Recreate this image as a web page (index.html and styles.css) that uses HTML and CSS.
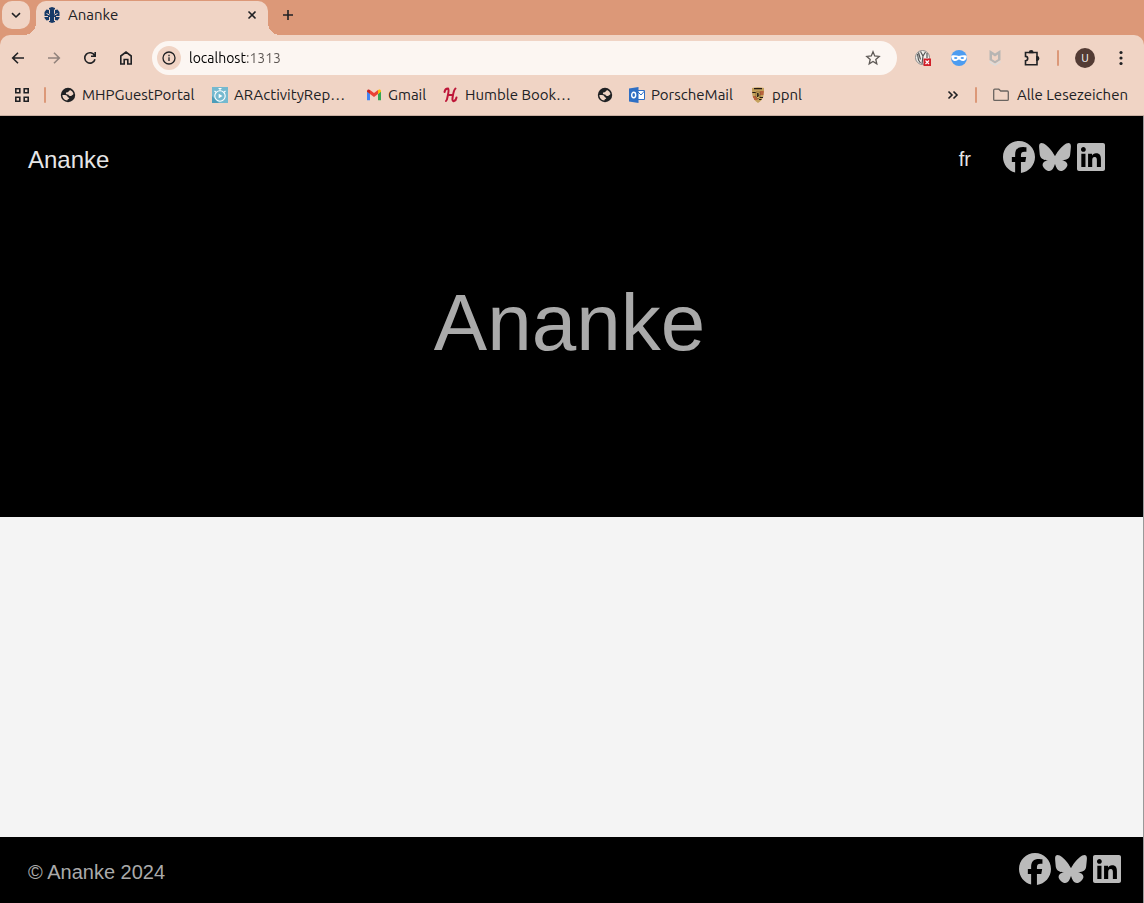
FILE: index.html
```html
<!DOCTYPE html>
<html lang="en">
<head>
<meta charset="utf-8">
<meta name="viewport" content="width=device-width, initial-scale=1">
<title>Ananke</title>
<link rel="stylesheet" href="styles.css">
</head>
<body>
<svg class="defs" aria-hidden="true">
  <symbol id="facebook" viewBox="0 0 512 512"><path d="M512 256C512 114.6 397.4 0 256 0S0 114.6 0 256C0 376 82.7 476.8 194.2 504.5V334.2H141.4V256h52.8V222.3c0-87.1 39.4-127.5 125-127.5c16.2 0 44.2 3.2 55.7 6.4V172c-6-.6-16.5-1-29.6-1c-42 0-58.2 15.9-58.2 57.2V256h83.6l-14.4 78.2H287V510.1C413.8 494.8 512 386.9 512 256z"/></symbol>
  <symbol id="bluesky" viewBox="0 0 512 512"><path d="M111.8 62.2C170.2 105.9 233 194.7 256 242.4c23-47.6 85.8-136.4 144.2-180.2c42.1-31.6 110.3-56 110.3 21.8c0 15.5-8.9 130.5-14.1 149.2C478.2 298 412 314.6 353.1 304.5c102.9 17.5 129.1 75.5 72.5 133.5c-107.4 110.2-154.3-27.6-166.3-62.9c-1.7-4.9-2.6-7.8-3.3-7.8s-1.6 3-3.3 7.8c-12 35.3-59 173.1-166.3 62.9c-56.5-58-30.4-116 72.5-133.5C100 314.6 33.8 298 15.7 233.1C10.4 214.4 1.5 99.4 1.5 83.9c0-77.8 68.2-53.4 110.3-21.8z"/></symbol>
  <symbol id="linkedin" viewBox="0 0 448 512"><path d="M416 32H31.9C14.3 32 0 46.5 0 64.3v383.4C0 465.5 14.3 480 31.9 480H416c17.6 0 32-14.5 32-32.3V64.3c0-17.8-14.4-32.3-32-32.3zM135.4 416H69V202.2h66.5V416zm-33.2-243c-21.3 0-38.5-17.3-38.5-38.5S80.9 96 102.2 96c21.2 0 38.5 17.3 38.5 38.5 0 21.3-17.2 38.5-38.5 38.5zm282.1 243h-66.4V312c0-24.8-.5-56.7-34.5-56.7-34.6 0-39.9 27-39.9 54.9V416h-66.4V202.2h63.7v29.2h.9c8.9-16.8 30.6-34.5 62.2-34.5 66.5 0 78.9 43.8 78.9 100.9V416z"/></symbol>
  <symbol id="globe" viewBox="0 0 16 16"><circle cx="8" cy="8" r="7.200" fill="#202124"/><path d="M2.400 8c1.800 0 3.600 0 4.600.8.800.7.100 1.400 1.300 1.600 1.100.2 1 .9.600 1.400-.6.600-1.400.4-1.600 1.700C4.500 13.300 2.300 11 2.400 8zM10 3c1.800.7 3.100 2.200 3.500 4-.5 1-1.500.9-1.800 1.500-.5.800-1.500.6-2.400.3C8.600 8.500 8.800 7.800 8 7.500 7 7.200 6 7.300 5.900 6.400c-.1-1 .8-1.100 1.800-1.200.8 0 .7-.9 1.400-1.200.5-.2.600-.7.900-1z" fill="#f0d4c5"/></symbol>
</svg>

<header class="browser">
  <div class="tabstrip">
    <button class="tab-search" aria-label="Search tabs"><svg width="16" height="16" viewBox="0 0 16 16" class="line"><path d="M4 6.200 8 10l4-3.800"/></svg></button>
    <div class="tab">
      <svg width="16" height="16" viewBox="0 0 16 16"><path d="M5 1 8 0l3 1v2l2.500-.5L15.500 5v6l-2 2.500L11 13v2l-3 1-3-1v-2l-2.500.5-2-2.500V5l2-2.500L5 3z" fill="#173a67"/><path d="M5.500 2.500v4.200M10.500 2.500v4.200M2.500 6.500 5.500 8M13.500 6.500 10.500 8M5.500 10v4M10.500 10v4M0 9.500h4M12 9.500h4" stroke="#f0d4c5"/></svg>
      <span class="tab-title">Ananke</span>
      <button class="icon-btn" aria-label="Close tab"><svg width="16" height="16" viewBox="0 0 16 16" class="line"><path d="m4.500 4.500 7 7m0-7-7 7"/></svg></button>
    </div>
    <button class="icon-btn new-tab" aria-label="New tab"><svg width="16" height="16" viewBox="0 0 16 16" class="line"><path d="M8 3v10M3 8h10"/></svg></button>
  </div>

  <div class="toolbar">
    <nav class="nav-buttons" aria-label="Navigation">
      <button class="icon-btn" aria-label="Back"><svg width="16" height="16" viewBox="0 0 16 16" class="line"><path d="M14 8H3M8 2.700 2.700 8 8 13.300"/></svg></button>
      <button class="icon-btn dim" aria-label="Forward"><svg width="16" height="16" viewBox="0 0 16 16" class="line"><path d="M2 8h11M8 2.700 13.300 8 8 13.300"/></svg></button>
      <button class="icon-btn" aria-label="Reload"><svg width="16" height="16" viewBox="0 0 16 16" class="line"><path d="M13 9.200A5.200 5.200 0 1 1 12.600 5.600M13.200 2v4.200H9"/></svg></button>
      <button class="icon-btn" aria-label="Home"><svg width="16" height="16" viewBox="0 0 16 16" class="line"><path d="M2.800 6 8 2l5.200 4v8H9.800V9.500H6.200V14H2.800z"/></svg></button>
    </nav>
    <div class="omnibox">
      <button class="site-info" aria-label="Site information"><svg width="16" height="16" viewBox="0 0 16 16" class="line thin"><circle cx="8" cy="8" r="6"/><path d="M8 7.300V11M8 4.800v1.400"/></svg></button>
      <input class="address" type="text" value="localhost:1313" aria-label="Address">
      <button class="icon-btn star" aria-label="Bookmark"><svg width="18" height="18" viewBox="0 0 18 18" class="line thin"><path d="m9 2.800 1.700 4.200 4.500.4-3.400 3 1 4.400L9 12.500l-3.800 2.300 1-4.400-3.400-3 4.500-.4z"/></svg></button>
    </div>
    <div class="extensions">
      <button class="icon-btn" aria-label="Script blocker"><svg width="16" height="16" viewBox="0 0 16 16"><circle cx="7.500" cy="7.500" r="7" fill="#f2f1ed" stroke="#888"/><path d="M5.500 1.500 8 6l2.500-4M8 6l-1 8M2.500 4l1 6 2 3M3.500 2.500l2 7M12 3v5" stroke="#555" stroke-width="1.200" fill="none"/><path d="M8.500 8.500H16V16H8.500z" fill="#d12029"/><path d="m10.500 10.500 3.500 3.500m0-3.500L10.500 14" stroke="#fff" stroke-width="1.200"/></svg></button>
      <button class="icon-btn" aria-label="Privacy mask"><svg width="16" height="16" viewBox="0 0 16 16"><circle cx="8" cy="8" r="8" fill="#4d9cf0"/><path d="M.3 5.700C3 4.800 6 5.300 8 6c2-.7 5-1.200 7.700-.3.2 2.500-.9 5.300-3.900 5.300-2 0-2.800-1.500-3.800-1.500S6.200 11 4.200 11C1.200 11 .1 8.200.3 5.700z" fill="#fff"/><ellipse cx="4.700" cy="8" rx="1.700" ry="1" fill="#4d9cf0"/><ellipse cx="11.300" cy="8" rx="1.700" ry="1" fill="#4d9cf0"/></svg></button>
      <button class="icon-btn" aria-label="Web protection"><svg width="16" height="16" viewBox="0 0 16 16"><path d="M2.500 0 8 3.500 13.500 0v10L8 13.500 2.500 10z" fill="#b7b5b3"/><path d="M5 4.500 8 6.500l3-2v4.700L8 11 5 9.200z" fill="#f0d4c5"/><path d="M2.500 11.500 8 15l5.500-3.500" fill="none" stroke="#dedbd8" stroke-width="1.800"/></svg></button>
      <button class="icon-btn" aria-label="Extensions"><svg width="18" height="18" viewBox="0 0 18 18" class="line"><path d="M2.500 3.500H14v12.300H2.500v-4a2.200 2.200 0 0 0 0-4.400z"/><path d="M6.600 3.500a1.600 1.600 0 0 1 3.200 0zM14 7.900a1.600 1.600 0 0 1 0 3.200z" fill="#202124"/></svg></button>
    </div>
    <span class="divider"></span>
    <button class="avatar" aria-label="Profile U">U</button>
    <button class="icon-btn" aria-label="Menu"><svg width="16" height="16" viewBox="0 0 16 16" fill="#202124"><circle cx="8" cy="2.500" r="1.600"/><circle cx="8" cy="8" r="1.600"/><circle cx="8" cy="13.500" r="1.600"/></svg></button>
  </div>

  <nav class="bookmarks" aria-label="Bookmarks">
    <button class="icon-btn" aria-label="Apps"><svg width="16" height="16" viewBox="0 0 16 16" class="line"><path d="M1.800 1.800h4v4h-4zM10.200 1.800h4v4h-4zM1.800 10.200h4v4h-4zM10.200 10.200h4v4h-4z"/></svg></button>
    <span class="divider"></span>
    <div class="bookmark-list">
      <a class="bookmark wide" href="#"><svg width="16" height="16"><use href="#globe"/></svg>MHPGuestPortal</a>
      <a class="bookmark wider" href="#"><svg width="16" height="16" viewBox="0 0 16 16"><path d="M0 0h16v16H0z" fill="#75b9cf"/><path d="M0 9v7h7z" fill="#4d9db9"/><g fill="none" stroke="#fff" stroke-width="1.100"><circle cx="8" cy="9" r="5.200"/><path d="M6.500 1.500h3M8 1.500v2M2.500 4 4 5.200M13.500 4 12 5.200"/></g><path d="M6.700 6.700 10.500 9l-3.800 2.300z" fill="#fff"/></svg>ARActivityRep…</a>
      <a class="bookmark short" href="#"><svg width="16" height="16" viewBox="0 0 16 16"><path d="M1 4v9.300h3V7z" fill="#4285f4"/><path d="M12 7v6.300h3V4z" fill="#34a853"/><path d="M1 4.200C1 2.500 2.800 2 4 3v4L1 4.800z" fill="#c5221f"/><path d="m4 3 4 3 4-3v4l-4 3-4-3z" fill="#ea4335"/><path d="M12 3c1.200-1 3-.5 3 1.200v.6L12 7z" fill="#fbbc04"/></svg>Gmail</a>
      <a class="bookmark widest" href="#"><svg width="16" height="16" viewBox="0 0 16 16" fill="none" stroke="#bd1638" stroke-width="2" stroke-linecap="round"><path d="M1.500 5c.3-2 1.500-3.500 3.500-3.500C6.500 3 5 7 4.500 10c-.3 2-.6 3.500-1.500 4M12.500 1.500C10.500 3 10 8 9.500 11c-.3 2 .2 3.500 1.500 3 1.500-.5 2.300-2 2.500-3.500M5 8h5"/></svg>Humble Book…</a>
      <a class="bookmark icon-only" href="#" aria-label="Untitled bookmark"><svg width="16" height="16"><use href="#globe"/></svg></a>
      <a class="bookmark wide-mail" href="#"><svg width="16" height="16" viewBox="0 0 16 16"><path d="M8 3.500h7.500v9H8z" fill="#fff" stroke="#2f6fc4"/><path d="m9 5 3 3 3.500-4" fill="none" stroke="#2f6fc4"/><path d="M0 1.500 9.500 0v16L0 14.500z" fill="#2f6fc4"/><ellipse cx="4.700" cy="8" rx="2" ry="2.700" fill="none" stroke="#fff" stroke-width="1.400"/></svg>PorscheMail</a>
      <a class="bookmark" href="#"><svg width="16" height="16" viewBox="0 0 16 16"><path d="M2 1c4-1 8-1 12 0 0 7 0 11-6 15C2 12 2 8 2 1z" fill="#c3a05b"/><path d="M10 5h3.700M10 7h3.500M3 10h3.500M4 12h3.500" stroke="#ab2420" stroke-width="1.200"/><path d="M2.300 5.500h3.500M9.800 10.500H13M9 12.500h2.500M4 1.700h8" stroke="#241b15" stroke-width="1.200"/><path d="M6 5h4v5l-2 2-2-2z" fill="#d6b566" stroke="#6c4a22" stroke-width=".6"/><path d="m7.500 10 .2-4 1 1.500v2" stroke="#241b15" fill="none"/></svg>ppnl</a>
    </div>
    <button class="icon-btn" aria-label="More bookmarks"><svg width="16" height="16" viewBox="0 0 16 16" class="line"><path d="m3.500 4.500 3.500 3.500-3.500 3.500M8.500 4.500 12 8l-3.500 3.500"/></svg></button>
    <span class="divider"></span>
    <a class="bookmark all" href="#"><svg width="16" height="16" viewBox="0 0 16 16" fill="none" stroke="#6a6460" stroke-width="1.300" stroke-linejoin="round"><path d="M.7 3.200c0-.7.400-1 1-1h4.200l1.800 1.800h6.600c.6 0 1 .4 1 1v7.400c0 .7-.4 1-1 1H1.700c-.6 0-1-.3-1-1z"/></svg>Alle Lesezeichen</a>
  </nav>
</header>

<div class="page">
  <header class="hero">
    <nav class="site-nav">
      <a class="brand" href="#">Ananke</a>
      <a class="lang" href="#">fr</a>
      <div class="social">
        <a href="#" aria-label="Facebook"><svg><use href="#facebook"/></svg></a>
        <a href="#" aria-label="Bluesky"><svg><use href="#bluesky"/></svg></a>
        <a href="#" aria-label="LinkedIn"><svg><use href="#linkedin"/></svg></a>
      </div>
    </nav>
    <h1 class="title">Ananke</h1>
  </header>
  <main class="content"></main>
  <footer class="site-footer">
    <a class="copyright" href="#">© Ananke 2024</a>
    <div class="social">
      <a href="#" aria-label="Facebook"><svg><use href="#facebook"/></svg></a>
      <a href="#" aria-label="Bluesky"><svg><use href="#bluesky"/></svg></a>
      <a href="#" aria-label="LinkedIn"><svg><use href="#linkedin"/></svg></a>
    </div>
  </footer>
</div>
</body>
</html>
```
FILE: styles.css
```css
* { box-sizing: border-box; }

body {
  margin: 0;
  min-height: 100vh;
  display: flex;
  flex-direction: column;
  background: #f4f4f4;
  font-family: "Liberation Sans", Arial, sans-serif;
}

a { color: inherit; text-decoration: none; }
svg { display: block; flex: none; }
button { border: 0; padding: 0; background: none; font: inherit; color: inherit; }
.defs { position: absolute; width: 0; height: 0; }
.line { fill: none; stroke: currentColor; stroke-width: 1.6; }
.thin { stroke-width: 1.3; }

/* Browser window */
.browser {
  background: #dc9878;
  color: #202124;
  font: 15px/20px Ubuntu, "Noto Sans", sans-serif;
}

.tabstrip { display: flex; height: 35px; padding: 1px 0 0 2px; }

.tab-search {
  display: grid;
  place-items: center;
  width: 28px;
  height: 28px;
  margin-right: 6px;
  border-radius: 10px;
  background: #f0d4c5;
}

.tab {
  position: relative;
  display: flex;
  align-items: center;
  gap: 8px;
  width: 232px;
  padding: 0 8px 6px;
  border-radius: 10px 10px 0 0;
  background: #f0d4c5;
}

.tab::before,
.tab::after {
  content: "";
  position: absolute;
  bottom: 0;
  width: 12px;
  height: 12px;
}
.tab::before { right: 100%; background: radial-gradient(circle at 0 0, transparent 12px, #f0d4c5 12px); }
.tab::after { left: 100%; background: radial-gradient(circle at 100% 0, transparent 12px, #f0d4c5 12px); }
.tab-title { flex: 1; }

.icon-btn { display: grid; place-items: center; flex: none; width: 16px; height: 20px; }
.new-tab { width: 40px; height: 28px; }
.dim { opacity: .45; }

.toolbar {
  display: flex;
  align-items: center;
  height: 40px;
  padding: 6px 15px 0 10px;
  border-radius: 10px 10px 0 0;
  background: #f0d4c5;
}

.nav-buttons { display: flex; gap: 20px; margin-right: 18px; }

.omnibox {
  flex: 1;
  display: flex;
  align-items: center;
  height: 34px;
  padding: 0 15px 0 5px;
  border-radius: 17px;
  background: #fcf6f2;
}

.site-info {
  display: grid;
  place-items: center;
  width: 24px;
  height: 24px;
  border-radius: 50%;
  background: #f0d4c5;
}

.address {
  flex: 1;
  min-width: 0;
  margin-left: 8px;
  padding: 0;
  border: 0;
  font: inherit;
  font-size: 14px;
  color: transparent;
  background: linear-gradient(90deg, #000 58px, #5c5653 58px);
  -webkit-background-clip: text;
  background-clip: text;
}

.star { width: 18px; color: #5d5855; }
.extensions { display: flex; gap: 20px; margin: 0 18px; }
.divider { flex: none; width: 2px; height: 16px; border-radius: 1px; background: #dc9878; }

.avatar {
  width: 20px;
  height: 20px;
  margin: 0 18px 0 16px;
  border-radius: 50%;
  background: #533b34;
  color: #fff;
  font-size: 11px;
}

.bookmarks {
  display: flex;
  align-items: center;
  height: 41px;
  padding: 0 15px 0 14px;
  border-bottom: 1px solid #c9afa2;
  background: #f0d4c5;
}
.bookmarks > .divider { margin: 0 14px; }
.bookmark-list { flex: 1; display: flex; min-width: 0; }
.bookmark { display: flex; align-items: center; gap: 6px; white-space: nowrap; }
.wide { width: 152px; }
.wider { width: 154px; }
.short { width: 77px; }
.widest { width: 154px; }
.icon-only { width: 32px; }
.wide-mail { width: 121px; }
.bookmarks > .all { gap: 8px; margin-left: 2px; padding-right: 1px; }

/* Website */
.page {
  flex: 1;
  display: flex;
  flex-direction: column;
  border-right: 1px solid #999;
}

.hero { padding-bottom: 144px; background: #000; }

.site-nav {
  display: flex;
  align-items: flex-start;
  padding: 25px 36px 25px 28px;
  color: #e6e6e6;
}
.brand { flex: 1; font-size: 24px; line-height: 38px; }
.lang { margin-right: 32px; font-size: 20px; line-height: 36px; }

.social { display: flex; gap: 4px; color: #bababa; }
.social svg { width: 32px; height: 32px; fill: currentColor; }

.title {
  margin: 0;
  padding: 69px 4px 0 0;
  color: #aaa;
  font-size: 80px;
  font-weight: 400;
  line-height: 100px;
  text-align: center;
}

.content { flex: 1; }

.site-footer {
  display: flex;
  align-items: flex-start;
  justify-content: space-between;
  padding: 16px 20px 12px 28px;
  background: #000;
  color: #aaa;
}
.copyright { font-size: 20px; line-height: 38px; }
```
